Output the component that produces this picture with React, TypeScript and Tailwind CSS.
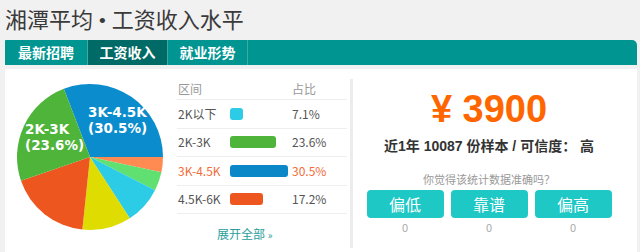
const slices = [
  { from: -21, to: 90, color: "#0b8dcd" },
  { from: 90, to: 102, color: "#ff8b52" },
  { from: 102, to: 117, color: "#5fe070" },
  { from: 117, to: 147, color: "#2ccbe6" },
  { from: 147, to: 186, color: "#dedc00" },
  { from: 186, to: 251, color: "#ee5620" },
  { from: 251, to: 339, color: "#4eb43a" },
];

const rows = [
  { label: "2K以下", pct: "7.1%", bar: 13, color: "#2ccbe6" },
  { label: "2K-3K", pct: "23.6%", bar: 46, color: "#4eb43a" },
  { label: "3K-4.5K", pct: "30.5%", bar: 58, color: "#0b86c6", active: true },
  { label: "4.5K-6K", pct: "17.2%", bar: 33, color: "#ee5620" },
];

function pt(a: number, r = 73, c = 75) {
  const rad = (a * Math.PI) / 180;
  return `${(c + r * Math.sin(rad)).toFixed(2)} ${(c - r * Math.cos(rad)).toFixed(2)}`;
}

function Pie() {
  return (
    <svg width="150" height="150" viewBox="0 0 150 150" className="shrink-0">
      {slices.map((s, i) => (
        <path
          key={i}
          d={`M75 75 L${pt(s.from)} A73 73 0 ${s.to - s.from > 180 ? 1 : 0} 1 ${pt(s.to)} Z`}
          fill={s.color}
        />
      ))}
      <g fill="#fff" fontWeight="bold" fontSize="13.5" fontFamily="'DejaVu Sans', sans-serif">
        <text x="73" y="35">3K-4.5K</text>
        <text x="73" y="51">(30.5%)</text>
        <text x="10" y="52">2K-3K</text>
        <text x="10" y="68">(23.6%)</text>
      </g>
    </svg>
  );
}

export default function App() {
  const cjk = { fontFamily: "'Noto Sans CJK SC', sans-serif" };
  return (
    <div className="w-[640px] h-[252px] bg-[#f1f1f1] overflow-hidden" style={cjk}>
      <div className="h-[40px] pl-[5px] pt-[5px]">
        <h1 className="text-[22px] leading-[26px] text-[#3a3a3a] font-normal">
          湘潭平均<span style={{ fontFamily: "'Liberation Serif', serif" }}> • </span>工资收入水平
        </h1>
      </div>

      <div className="ml-[5px] w-[632px] h-[25px] bg-[#009591] rounded-tr-[5px] rounded-tl-[1px] flex text-white text-[14px] font-bold">
        <div className="w-[83px] flex items-center justify-center border-r border-[#3aaca8]">最新招聘</div>
        <div className="w-[80px] flex items-center justify-center bg-[#006a66] border-r border-[#3aaca8]">工资收入</div>
        <div className="w-[80px] flex items-center justify-center border-r border-[#3aaca8]">就业形势</div>
      </div>

      <div className="mt-[4px] ml-[5px] w-[632px] h-[183px] bg-white flex">
        <div className="w-[345px] flex">
          <div className="ml-[10px] mt-[13px]">
            <Pie />
          </div>
          <div className="ml-[12px] mt-[9px] w-[170px] text-[12px] text-[#555]">
            <div className="h-[22px] flex items-center border-b border-[#eeeeee] text-[#999]">
              <span className="w-[115px] pl-[1px]">区间</span>
              <span>占比</span>
            </div>
            {rows.map((r) => (
              <div
                key={r.label}
                className={`h-[28.5px] flex items-center border-b border-[#eeeeee] ${r.active ? "text-[#f26c3a]" : ""}`}
              >
                <span className="w-[53px] pl-[1px]">{r.label}</span>
                <span className="w-[62px]">
                  <span className="block h-[12px] rounded-[3px]" style={{ width: r.bar, background: r.color }} />
                </span>
                <span>{r.pct}</span>
              </div>
            ))}
            <div className="mt-[12px] pl-[40px] text-[#2a9e9a] leading-[16px]">
              展开全部 <span className="text-[10px]">»</span>
            </div>
          </div>
        </div>

        <div className="w-[3px] mt-[10px] h-[169px] bg-[#ececec]" />

        <div className="flex-1 pl-[13px] pr-[25px] flex flex-col items-center">
          <div
            className="mt-[21px] text-[38px] leading-[38px] font-bold text-[#ff6600]"
            style={{ fontFamily: "'Liberation Sans', Arial, sans-serif" }}
          >
            ¥ 3900
          </div>
          <div
            className="mt-[8px] text-[14px] leading-[20px] font-bold text-[#333]"
            style={{ fontFamily: "'Liberation Sans', 'Noto Sans CJK SC', sans-serif" }}
          >
            近1年 10087 份样本 / 可信度： 高
          </div>
          <div className="mt-[15px] text-[11px] leading-[16px] text-[#999]">你觉得该统计数据准确吗？</div>
          <div className="mt-[3px] flex gap-[7px]">
            {["偏低", "靠谱", "偏高"].map((t) => (
              <div key={t} className="w-[77px] flex flex-col items-center">
                <div className="w-full h-[28px] rounded-[4px] bg-[#1ec8c5] text-white text-[16px] flex items-center justify-center">
                  {t}
                </div>
                <div className="mt-[2px] text-[11px] leading-[14px] text-[#aaa]">0</div>
              </div>
            ))}
          </div>
        </div>
      </div>
    </div>
  );
}
